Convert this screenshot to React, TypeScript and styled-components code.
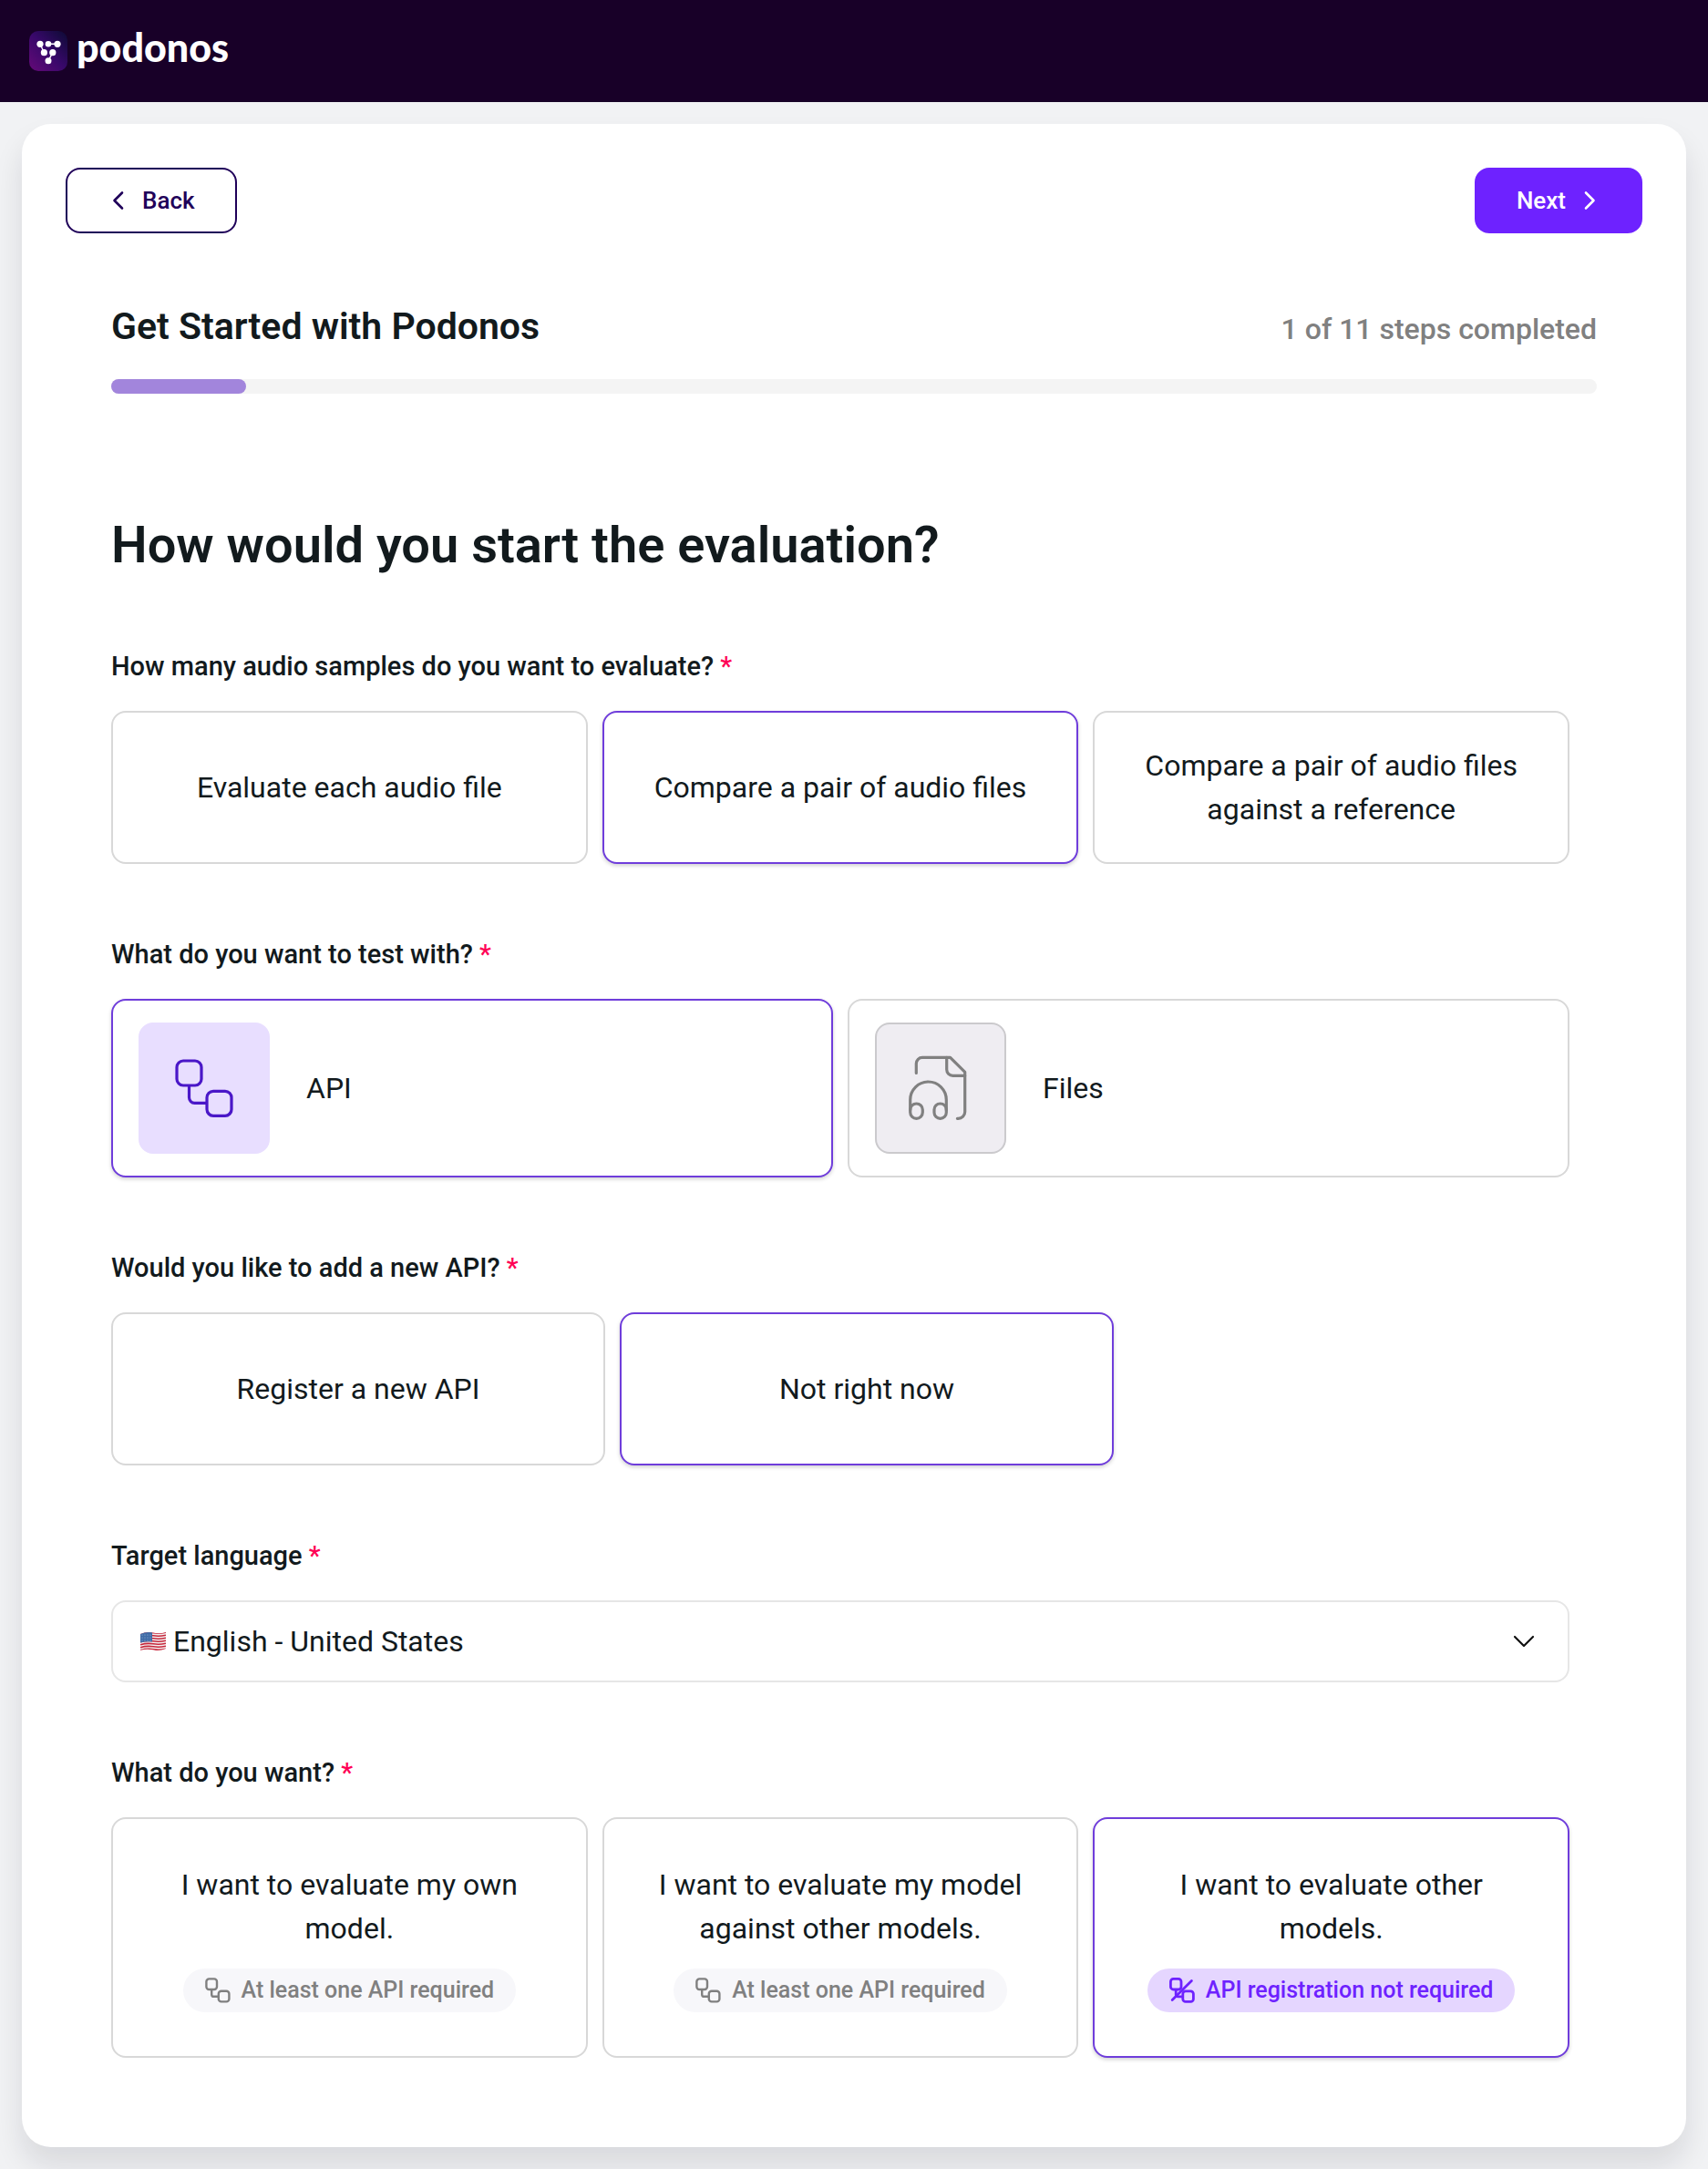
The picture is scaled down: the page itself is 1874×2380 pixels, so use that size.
import React, { useId, useState } from "react";
import styled, { createGlobalStyle, css } from "styled-components";

const color = {
  header: "#180028",
  page: "#f1f2f4",
  ink: "#121a1d",
  muted: "#808080",
  line: "#d8d8d8",
  brand: "#6e22ff",
  selected: "#6f3ddb",
  navy: "#1f0059",
  required: "#ff0055",
};

const GlobalStyle = createGlobalStyle`
  *, *::before, *::after { box-sizing: border-box; }
  body {
    margin: 0;
    background: ${color.page};
    color: ${color.ink};
    font-family: Roboto, "Liberation Sans", sans-serif;
  }
  button, select, input { font: inherit; color: inherit; }
`;

const Header = styled.header`
  display: flex;
  align-items: center;
  height: 112px;
  padding: 0 32px;
  background: ${color.header};
`;

const Brand = styled.a`
  display: flex;
  align-items: center;
  gap: 10px;
  color: #fff;
  text-decoration: none;
`;

const Wordmark = styled.span`
  font-family: Lato, sans-serif;
  font-size: 43px;
  font-weight: 900;
  line-height: 48px;
  padding-bottom: 8px;
`;

const Page = styled.main`
  padding: 24px;
`;

const Card = styled.div`
  padding: 48px;
  border-radius: 32px;
  background: #fff;
  box-shadow: 0 20px 32px rgba(16, 20, 40, 0.11);
`;

const Nav = styled.nav`
  display: flex;
  justify-content: space-between;
`;

const NavButton = styled.button<{ $primary?: boolean }>`
  display: flex;
  align-items: center;
  gap: 14px;
  height: 72px;
  padding: 0 44px;
  border: 2px solid ${(p) => (p.$primary ? color.brand : color.navy)};
  border-radius: 16px;
  background: ${(p) => (p.$primary ? color.brand : "#fff")};
  color: ${(p) => (p.$primary ? "#fff" : color.navy)};
  font-size: 26px;
  font-weight: 500;
  cursor: pointer;
`;

const Body = styled.div`
  padding: 72px 50px 50px;
`;

const ProgressHead = styled.div`
  display: flex;
  align-items: baseline;
  justify-content: space-between;
  margin-bottom: 28px;
`;

const Title = styled.h1`
  margin: 0;
  font-size: 41px;
  font-weight: 600;
  line-height: 60px;
`;

const Steps = styled.span`
  color: ${color.muted};
  font-size: 32px;
  font-weight: 500;
  line-height: 48px;
`;

const Track = styled.div`
  height: 16px;
  border-radius: 8px;
  background: #f4f4f4;
`;

const Fill = styled.div`
  height: 100%;
  border-radius: 8px;
  background: #a285dc;
`;

const Form = styled.form`
  display: flex;
  flex-direction: column;
  gap: 78px;
  padding-right: 30px;
`;

const Question = styled.h2`
  margin: 124px 0 70px;
  font-size: 56px;
  font-weight: 600;
  line-height: 84px;
`;

const Group = styled.fieldset`
  min-width: 0;
  margin: 0;
  padding: 0;
  border: 0;
`;

const labelText = css`
  display: block;
  margin-bottom: 28px;
  padding: 0;
  font-size: 29px;
  font-weight: 500;
  line-height: 42px;
`;

const Legend = styled.legend`
  ${labelText}
`;

const FieldLabel = styled.label`
  ${labelText}
`;

const Star = styled.span`
  color: ${color.required};
`;

const Options = styled.div<{ $columns: number; $narrow?: boolean }>`
  display: grid;
  grid-template-columns: repeat(${(p) => p.$columns}, 1fr);
  gap: 16px;
  max-width: ${(p) => (p.$narrow ? "1100px" : "none")};
`;

const HiddenRadio = styled.input`
  position: absolute;
  opacity: 0;
  pointer-events: none;
`;

const optionFrame = css<{ $selected: boolean }>`
  position: relative;
  display: flex;
  align-items: center;
  border: 2px solid ${(p) => (p.$selected ? color.selected : color.line)};
  border-radius: 16px;
  background: #fff;
  box-shadow: ${(p) => (p.$selected ? "0 2px 4px rgba(0, 0, 0, 0.18)" : "none")};
  font-size: 32px;
  line-height: 48px;
  cursor: pointer;
`;

const Option = styled.label<{ $selected: boolean }>`
  ${optionFrame}
  flex-direction: column;
  justify-content: center;
  gap: 20px;
  min-height: 168px;
  padding: 30px 48px;
  text-align: center;
`;

const TallOption = styled(Option)`
  padding: 48px;
`;

const MediaOption = styled.label<{ $selected: boolean }>`
  ${optionFrame}
  gap: 40px;
  padding: 24px 28px;
`;

const MediaTile = styled.span<{ $active?: boolean }>`
  display: flex;
  align-items: center;
  justify-content: center;
  width: 144px;
  height: 144px;
  border: 2px solid ${(p) => (p.$active ? "#e8deff" : "#cbcacd")};
  border-radius: 16px;
  background: ${(p) => (p.$active ? "#e8deff" : "#efedf2")};
  color: ${(p) => (p.$active ? "#4a17c8" : color.muted)};
`;

const Pill = styled.span<{ $active: boolean }>`
  display: flex;
  align-items: center;
  gap: 12px;
  height: 48px;
  padding: 0 24px;
  border-radius: 24px;
  background: ${(p) => (p.$active ? "#e5d6ff" : "#f7f7fa")};
  color: ${(p) => (p.$active ? color.brand : color.muted)};
  font-size: 25px;
  font-weight: 500;
  line-height: 36px;
  white-space: nowrap;
`;

const SelectBox = styled.div`
  position: relative;
`;

const Select = styled.select`
  display: block;
  width: 100%;
  height: 90px;
  padding: 0 80px 0 66px;
  border: 2px solid #e6e6e6;
  border-radius: 16px;
  background: #fff;
  font-size: 32px;
  appearance: none;
  cursor: pointer;
`;

const Adornment = styled.span<{ $side: "left" | "right" }>`
  position: absolute;
  top: 0;
  bottom: 0;
  ${(p) => p.$side}: 32px;
  display: flex;
  align-items: center;
  pointer-events: none;
`;

const LogoMark = () => (
  <svg width="42" height="44" viewBox="0 0 42 44" aria-hidden="true">
    <defs>
      <linearGradient id="mark" x1="0" y1="1" x2="1" y2="0">
        <stop offset="0" stopColor="#650a78" />
        <stop offset="0.5" stopColor="#38086a" />
        <stop offset="1" stopColor="#0c0b33" />
      </linearGradient>
    </defs>
    <rect width="42" height="44" rx="10" fill="url(#mark)" />
    <g fill="#fff">
      <circle cx="12" cy="14.3" r="3.6" />
      <circle cx="21" cy="14.3" r="3.3" />
      <circle cx="31" cy="14.3" r="3.6" />
      <circle cx="16.4" cy="23.7" r="3.6" />
      <circle cx="25.8" cy="23.7" r="3.6" />
      <circle cx="21" cy="32.8" r="3.5" />
    </g>
    <path d="M12 14.3 16.4 23.7M21 14.3H31M25.8 23.7 21 32.8" stroke="#fff" strokeWidth="1.4" />
  </svg>
);

const ChevronIcon = ({ flip }: { flip?: boolean }) => (
  <svg width="24" height="24" viewBox="0 0 24 24" fill="none" stroke="currentColor" strokeWidth="2.6" strokeLinecap="round" strokeLinejoin="round" aria-hidden="true">
    <path d={flip ? "M8 3.5 16.5 12 8 20.5" : "M16 3.5 7.5 12 16 20.5"} />
  </svg>
);

const ChevronDown = () => (
  <svg width="36" height="36" viewBox="0 0 36 36" fill="none" stroke="#111" strokeWidth="2.2" strokeLinecap="round" strokeLinejoin="round" aria-hidden="true">
    <path d="M8 13 18 23 28 13" />
  </svg>
);

const NodesIcon = () => (
  <svg width="64" height="64" viewBox="0 0 64 64" fill="none" stroke="currentColor" strokeWidth="3.2" aria-hidden="true">
    <rect x="2" y="2" width="27" height="27" rx="7" />
    <rect x="35" y="35.3" width="27" height="27" rx="7" />
    <path d="M15.5 29v13.3a6 6 0 0 0 6 6H35" />
  </svg>
);

const SmallNodesIcon = ({ slashed }: { slashed?: boolean }) => (
  <svg width="28" height="28" viewBox="0 0 28 28" fill="none" stroke="currentColor" strokeWidth={slashed ? 2.8 : 2.4} aria-hidden="true">
    <rect x="1.4" y="1.4" width="11.6" height="11.6" rx="3" />
    <rect x="14.8" y="14.8" width="11.6" height="11.6" rx="3" />
    <path d="M7.2 13v5.4a2.4 2.4 0 0 0 2.4 2.4h5.2" />
    {slashed && <path d="M3.2 24.4 24.4 3.6" strokeLinecap="round" />}
  </svg>
);

const AudioFileIcon = () => (
  <svg width="72" height="72" viewBox="0 0 72 72" fill="none" stroke="currentColor" strokeWidth="3.2" strokeLinecap="round" strokeLinejoin="round" aria-hidden="true">
    <path d="M9.3 19.5V9a6.7 6.7 0 0 1 6.7-6.7h30.6L62.7 18.4V62a7.3 7.3 0 0 1-7.3 7.3H54.4" />
    <path d="M42.7 2.3V15.6a6.7 6.7 0 0 0 6.7 6.7H62.7" />
    <path d="M2.7 60V48.8a19.8 19.8 0 0 1 39.6 0V60" />
    <rect x="2.7" y="53" width="13.6" height="16.3" rx="6.8" />
    <rect x="29" y="53" width="13.3" height="16.3" rx="6.6" />
  </svg>
);

const FlagIcon = () => (
  <svg width="28" height="22" viewBox="0 0 28 22" aria-hidden="true">
    <defs>
      <clipPath id="flag">
        <path d="M0 3Q7 0 14 1.6T28 1V19Q21 22 14 20.4T0 20.8Z" />
      </clipPath>
    </defs>
    <g clipPath="url(#flag)">
      <rect width="28" height="22" fill="#f3f1f1" />
      <g fill="none" stroke="#c7283c" strokeWidth="1.6">
        {[0, 1, 2, 3, 4, 5, 6].map((i) => (
          <path key={i} d={`M0 ${2.8 + i * 3}Q7 ${0.6 + i * 3} 14 ${1.8 + i * 3}T28 ${1.2 + i * 3}`} />
        ))}
      </g>
      <path d="M0 0H13V11.4Q7 10.6 0 12.6Z" fill="#3f6ba6" />
      <g fill="#9db8dc">
        {[3, 6, 9].map((y) => [2, 5, 8, 11].map((x) => <circle key={`${x}-${y}`} cx={x} cy={y + 1} r="0.6" />))}
      </g>
    </g>
  </svg>
);

const Required = () => <Star aria-hidden="true">*</Star>;

type Note = { text: string; slashed?: boolean };
type Item = { text: string; note?: Note; icon?: React.ReactNode };

type ChoiceProps = {
  label: string;
  items: Item[];
  initial: number;
  columns: number;
  narrow?: boolean;
};

function Choice({ label, items, initial, columns, narrow }: ChoiceProps) {
  const name = useId();
  const [chosen, setChosen] = useState(initial);
  return (
    <Group>
      <Legend>
        {label} <Required />
      </Legend>
      <Options $columns={columns} $narrow={narrow}>
        {items.map((item, i) => {
          const selected = i === chosen;
          const Frame = item.icon ? MediaOption : item.note ? TallOption : Option;
          return (
            <Frame key={item.text} $selected={selected}>
              <HiddenRadio type="radio" name={name} checked={selected} onChange={() => setChosen(i)} />
              {item.icon && <MediaTile $active={selected}>{item.icon}</MediaTile>}
              <span>{item.text}</span>
              {item.note && (
                <Pill $active={selected}>
                  <SmallNodesIcon slashed={item.note.slashed} />
                  {item.note.text}
                </Pill>
              )}
            </Frame>
          );
        })}
      </Options>
    </Group>
  );
}

function LanguageField() {
  return (
    <div>
      <FieldLabel htmlFor="language">
        Target language <Required />
      </FieldLabel>
      <SelectBox>
        <Select id="language" defaultValue="en-US">
          <option value="en-US">English - United States</option>
        </Select>
        <Adornment $side="left">
          <FlagIcon />
        </Adornment>
        <Adornment $side="right">
          <ChevronDown />
        </Adornment>
      </SelectBox>
    </div>
  );
}

const step = 1;
const totalSteps = 11;

export default function App() {
  return (
    <>
      <GlobalStyle />
      <Header>
        <Brand href="#">
          <LogoMark />
          <Wordmark>podonos</Wordmark>
        </Brand>
      </Header>
      <Page>
        <Card>
          <Nav>
            <NavButton type="button">
              <ChevronIcon />
              Back
            </NavButton>
            <NavButton type="button" $primary>
              Next
              <ChevronIcon flip />
            </NavButton>
          </Nav>
          <Body>
            <ProgressHead>
              <Title>Get Started with Podonos</Title>
              <Steps>
                {step} of {totalSteps} steps completed
              </Steps>
            </ProgressHead>
            <Track role="progressbar" aria-label="Steps completed" aria-valuemin={0} aria-valuemax={totalSteps} aria-valuenow={step}>
              <Fill style={{ width: `${(step / totalSteps) * 100}%` }} />
            </Track>
            <Question>How would you start the evaluation?</Question>
            <Form>
              <Choice
                label="How many audio samples do you want to evaluate?"
                columns={3}
                initial={1}
                items={[
                  { text: "Evaluate each audio file" },
                  { text: "Compare a pair of audio files" },
                  { text: "Compare a pair of audio files against a reference" },
                ]}
              />
              <Choice
                label="What do you want to test with?"
                columns={2}
                initial={0}
                items={[
                  { text: "API", icon: <NodesIcon /> },
                  { text: "Files", icon: <AudioFileIcon /> },
                ]}
              />
              <Choice
                label="Would you like to add a new API?"
                columns={2}
                narrow
                initial={1}
                items={[{ text: "Register a new API" }, { text: "Not right now" }]}
              />
              <LanguageField />
              <Choice
                label="What do you want?"
                columns={3}
                initial={2}
                items={[
                  { text: "I want to evaluate my own model.", note: { text: "At least one API required" } },
                  { text: "I want to evaluate my model against other models.", note: { text: "At least one API required" } },
                  { text: "I want to evaluate other models.", note: { text: "API registration not required", slashed: true } },
                ]}
              />
            </Form>
          </Body>
        </Card>
      </Page>
    </>
  );
}
